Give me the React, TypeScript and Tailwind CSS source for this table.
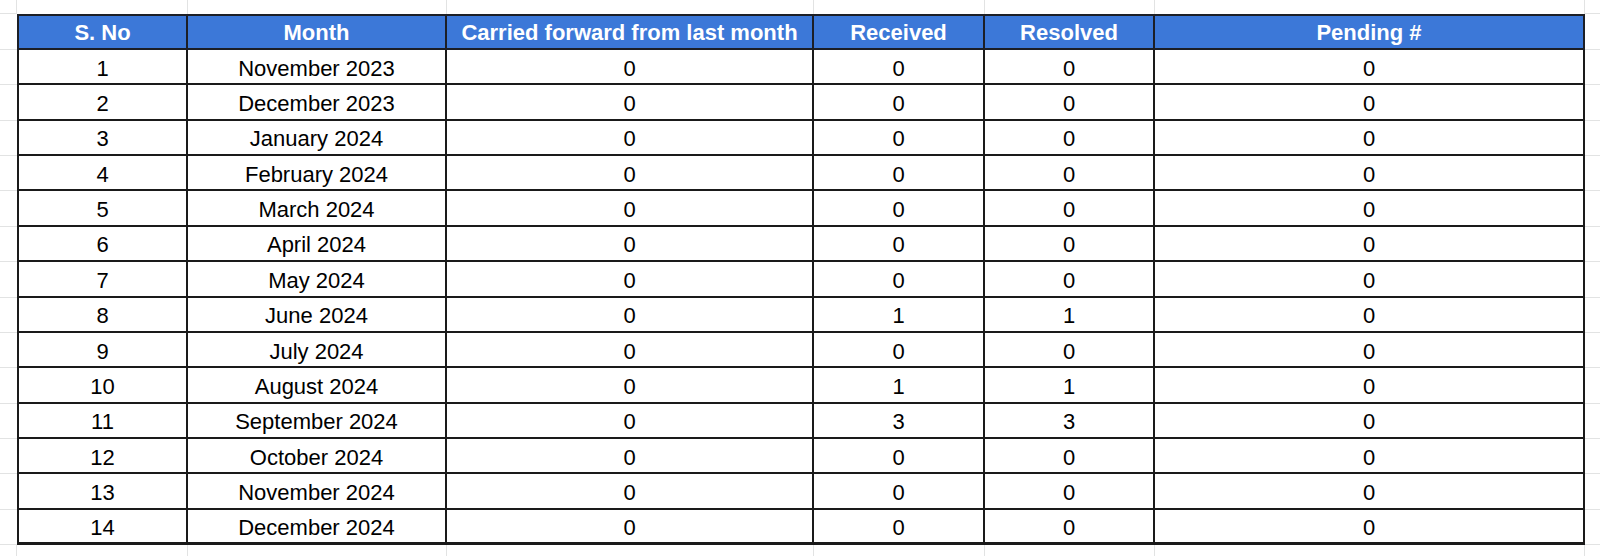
const headers = ["S. No", "Month", "Carried forward from last month", "Received", "Resolved", "Pending #"];

const rows: [number, string, number, number, number, number][] = [
  [1, "November 2023", 0, 0, 0, 0],
  [2, "December 2023", 0, 0, 0, 0],
  [3, "January 2024", 0, 0, 0, 0],
  [4, "February 2024", 0, 0, 0, 0],
  [5, "March 2024", 0, 0, 0, 0],
  [6, "April 2024", 0, 0, 0, 0],
  [7, "May 2024", 0, 0, 0, 0],
  [8, "June 2024", 0, 1, 1, 0],
  [9, "July 2024", 0, 0, 0, 0],
  [10, "August 2024", 0, 1, 1, 0],
  [11, "September 2024", 0, 3, 3, 0],
  [12, "October 2024", 0, 0, 0, 0],
  [13, "November 2024", 0, 0, 0, 0],
  [14, "December 2024", 0, 0, 0, 0],
];

function Blank({ right = true, bottom = true }: { right?: boolean; bottom?: boolean }) {
  return (
    <div
      className={`${right ? "border-r" : ""} ${bottom ? "border-b" : ""} border-[#e2e3e3] bg-white`}
    />
  );
}

export default function App() {
  return (
    <div
      className="grid h-[556px] w-[1600px] grid-cols-[17px_171px_259px_367px_171px_170px_430px_1fr] grid-rows-[14px_36px_repeat(14,35.36px)_1fr] bg-white text-[22px] text-black"
      style={{ fontFamily: '"Liberation Sans", Arial, sans-serif' }}
    >
      {/* top gutter row */}
      <Blank bottom={true} />
      {headers.map((h) => (
        <Blank key={h} bottom={false} />
      ))}
      <Blank right={false} />

      {/* header */}
      <Blank right={false} />
      {headers.map((h, i) => (
        <div
          key={h}
          className={`flex items-center justify-center border-y-2 border-r-2 border-[#1c1f26] bg-[#3c78d8] font-bold whitespace-nowrap text-white ${
            i === 0 ? "border-l-2" : ""
          }`}
        >
          {h}
        </div>
      ))}
      <Blank right={false} />

      {/* body */}
      {rows.map((r, ri) => (
        <div key={r[0]} className="contents">
          <Blank right={false} />
          {r.map((v, i) => (
            <div
              key={i}
              className={`flex items-center justify-center border-r-2 border-[#1a1a1a] pt-[3px] whitespace-nowrap ${
                ri === rows.length - 1 ? "border-b-[3px]" : "border-b-2"
              } ${i === 0 ? "border-l-2" : ""}`}
            >
              {v}
            </div>
          ))}
          <Blank right={false} />
        </div>
      ))}

      {/* bottom gutter row */}
      <Blank bottom={false} />
      {headers.map((h) => (
        <Blank key={h} bottom={false} />
      ))}
      <Blank right={false} bottom={false} />
    </div>
  );
}
